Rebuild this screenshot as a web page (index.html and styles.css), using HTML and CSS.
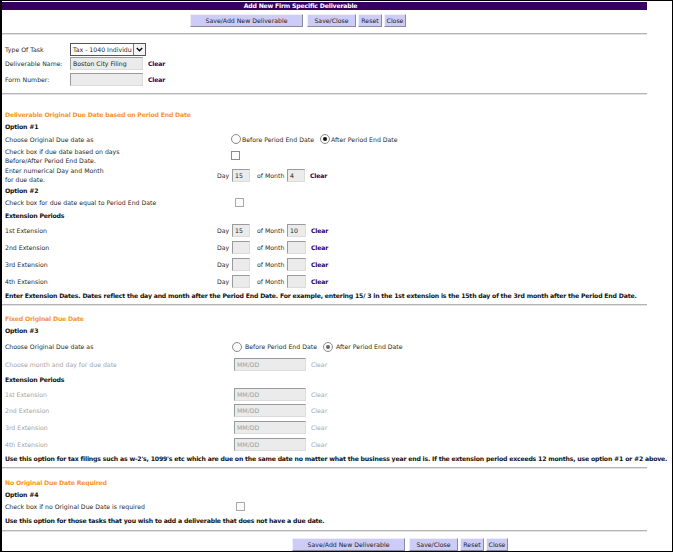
FILE: index.html
```html
<!DOCTYPE html>
<html>
<head>
<meta charset="utf-8">
<link rel="stylesheet" href="styles.css">
</head>
<body>
<div class="frame">
  <div class="page">
    <div class="titlebar">Add New Firm Specific Deliverable</div>
    <div class="btnbar top">
      <button class="btn w-save">Save/Add New Deliverable</button>
      <button class="btn w-close2">Save/Close</button>
      <button class="btn w-reset">Reset</button>
      <button class="btn w-close">Close</button>
    </div>
    <div class="rule"></div>

    <div class="fsec">
      <div class="frow h14">
        <span class="flabel">Type Of Task</span>
        <span class="selbox"><span class="seltext">Tax - 1040 Individu</span><span class="selarrow"><svg width="7" height="5" viewBox="0 0 7 5"><path d="M0.8 1 L3.5 3.8 L6.2 1" fill="none" stroke="#000" stroke-width="1.3"/></svg></span></span>
      </div>
      <div class="frow h15">
        <span class="flabel">Deliverable Name:</span>
        <span class="txt w73">Boston City Filing</span>
        <a class="clear">Clear</a>
      </div>
      <div class="frow h16">
        <span class="flabel">Form Number:</span>
        <span class="txt w73"></span>
        <a class="clear">Clear</a>
      </div>
    </div>
    <div class="rule r-form"></div>

    <div class="row h13 mt13"><span class="orange">Deliverable Original Due Date based on Period End Date</span></div>
    <div class="row h11"><b>Option #1</b></div>
    <div class="row h14">
      <span>Choose Original Due date as</span>
      <span class="ctl pl14"><i class="radio"></i><span class="rlab">Before Period End Date</span><i class="radio on"></i><span class="rlab">After Period End Date</span></span>
    </div>
    <div class="row h19">
      <span class="two">Check box if due date based on days<br>Before/After Period End Date.</span>
      <span class="ctl pl14"><i class="check"></i></span>
    </div>
    <div class="row h20">
      <span class="two">Enter numerical Day and Month<br>for due date.</span>
      <span class="ctl"><span class="dlab">Day</span><span class="txt w18">15</span><span class="mlab">of Month</span><span class="txt w18 m2">4</span><a class="clear">Clear</a></span>
    </div>
    <div class="row h11"><b>Option #2</b></div>
    <div class="row h13">
      <span>Check box for due date equal to Period End Date</span>
      <span class="ctl pl18"><i class="check lite"></i></span>
    </div>
    <div class="row h13"><b>Extension Periods</b></div>
    <div class="row h17">
      <span>1st Extension</span>
      <span class="ctl"><span class="dlab">Day</span><span class="txt w18">15</span><span class="mlab">of Month</span><span class="txt w19">10</span><a class="clear">Clear</a></span>
    </div>
    <div class="row h17">
      <span>2nd Extension</span>
      <span class="ctl"><span class="dlab">Day</span><span class="txt w18"></span><span class="mlab">of Month</span><span class="txt w19"></span><a class="clear">Clear</a></span>
    </div>
    <div class="row h17">
      <span>3rd Extension</span>
      <span class="ctl"><span class="dlab">Day</span><span class="txt w18"></span><span class="mlab">of Month</span><span class="txt w19"></span><a class="clear">Clear</a></span>
    </div>
    <div class="row h16">
      <span>4th Extension</span>
      <span class="ctl"><span class="dlab">Day</span><span class="txt w18"></span><span class="mlab">of Month</span><span class="txt w19"></span><a class="clear">Clear</a></span>
    </div>
    <div class="row h12"><b class="note">Enter Extension Dates. Dates reflect the day and month after the Period End Date. For example, entering 15/ 3 in the 1st extension is the 15th day of the 3rd month after the Period End Date.</b></div>
    <div class="rule r-mid"></div>

    <div class="row h12 mt6"><span class="orange">Fixed Original Due Date</span></div>
    <div class="row h13"><b>Option #3</b></div>
    <div class="row h19">
      <span>Choose Original Due date as</span>
      <span class="ctl pl15"><i class="radio"></i><span class="rlab l3">Before Period End Date</span><i class="radio on dim"></i><span class="rlab l3">After Period End Date</span></span>
    </div>
    <div class="row h16 gray">
      <span>Choose month and day for due date</span>
      <span class="ctl pl17"><span class="txt w72 ph">MM/DD</span><span class="gclear">Clear</span></span>
    </div>
    <div class="row h14"><b>Extension Periods</b></div>
    <div class="row h16 gray">
      <span>1st Extension</span>
      <span class="ctl pl17"><span class="txt w72 ph">MM/DD</span><span class="gclear">Clear</span></span>
    </div>
    <div class="row h17 gray">
      <span>2nd Extension</span>
      <span class="ctl pl17"><span class="txt w72 ph">MM/DD</span><span class="gclear">Clear</span></span>
    </div>
    <div class="row h17 gray">
      <span>3rd Extension</span>
      <span class="ctl pl17"><span class="txt w72 ph">MM/DD</span><span class="gclear">Clear</span></span>
    </div>
    <div class="row h16 gray">
      <span>4th Extension</span>
      <span class="ctl pl17"><span class="txt w72 ph">MM/DD</span><span class="gclear">Clear</span></span>
    </div>
    <div class="row h13"><b class="note">Use this option for tax filings such as w-2's, 1099's etc which are due on the same date no matter what the business year end is. If the extension period exceeds 12 months, use option #1 or #2 above.</b></div>
    <div class="rule r-mid2"></div>

    <div class="row h12 mt7"><span class="orange">No Original Due Date Required</span></div>
    <div class="row h12"><b>Option #4</b></div>
    <div class="row h13">
      <span>Check box if no Original Due Date is required</span>
      <span class="ctl pl19"><i class="check lite"></i></span>
    </div>
    <div class="row h14"><b class="note">Use this option for those tasks that you wish to add a deliverable that does not have a due date.</b></div>
    <div class="rule r-end"></div>
    <div class="btnbar bottom">
      <button class="btn w-save">Save/Add New Deliverable</button>
      <button class="btn w-close2">Save/Close</button>
      <button class="btn w-reset">Reset</button>
      <button class="btn w-close">Close</button>
    </div>
  </div>
</div>
</body>
</html>
```
FILE: styles.css
```css
* { box-sizing: border-box; }
html, body { margin: 0; padding: 0; background: #fff; }
body {
  font-family: "DejaVu Sans", "Liberation Sans", sans-serif;
  font-size: 6.2px;
  color: #2a2a2a;
}
.frame {
  width: 673px;
  height: 552px;
  border-style: solid;
  border-color: #000;
  border-width: 1px 1px 1px 2px;
  overflow: hidden;
}
.page { width: 645px; }

.titlebar {
  margin-top: 1px;
  height: 8px;
  line-height: 8px;
  background: #35005f;
  color: #fff;
  font-weight: bold;
  letter-spacing: -0.2px;
  text-align: center;
  padding-right: 48px;
}

.btnbar { display: flex; align-items: flex-start; }
.btnbar.top { height: 23px; padding: 4px 0 0 188px; }
.btnbar.bottom { padding: 6px 0 0 290px; }
.btn {
  height: 13px;
  padding: 0;
  margin: 0;
  font: inherit;
  color: #222;
  background: #ccccf6;
  border: 1px solid;
  border-color: #eeeeff #8a8a9a #8a8a9a #eeeeff;
  text-align: center;
}
.w-save { width: 113px; margin-right: 4px; }
.w-close2 { width: 49px; margin-right: 2px; }
.w-reset { width: 24px; margin-right: 2px; }
.w-close { width: 22px; }

.rule {
  height: 2px;
  border-top: 1px solid #b4b4b4;
  border-bottom: 1px solid #e4e4e4;
}
.r-form { margin-top: 6px; }
.r-mid { margin-top: 3px; }
.r-mid2 { margin-top: 2px; }
.r-end { margin-top: 3px; }

.fsec { padding-top: 7px; }
.frow { display: flex; align-items: center; padding-left: 3px; }
.flabel { width: 65px; flex: none; }

.selbox {
  display: flex;
  width: 76px;
  height: 13px;
  border: 1px solid #555;
  background: #fff;
}
.seltext {
  flex: 1;
  overflow: hidden;
  white-space: nowrap;
  line-height: 11px;
  padding-left: 2px;
}
.selarrow {
  width: 12px;
  flex: none;
  border-left: 1px solid #777;
  display: flex;
  align-items: center;
  justify-content: center;
  background: #f4f4f4;
}

.txt {
  display: inline-block;
  height: 13px;
  line-height: 11px;
  padding-left: 2px;
  background: #ebebeb;
  border: 1px solid;
  border-color: #9a9a9a #dcdcdc #dcdcdc #9a9a9a;
  white-space: nowrap;
  overflow: hidden;
  color: #222;
  flex: none;
}
.w73 { width: 73px; }
.w18 { width: 18px; }
.w19 { width: 19px; }
.w72 { width: 72px; }
.ph { color: #a0a0a0; }

.clear {
  color: #330066;
  font-weight: bold;
  letter-spacing: -0.2px;
  margin-left: 5px;
  text-decoration: none;
}
.gclear { color: #a8a8a8; margin-left: 5px; }

.row {
  display: grid;
  grid-template-columns: 212px auto;
  align-items: center;
  padding-left: 3px;
  white-space: nowrap;
}
.h11 { height: 11px; }
.h12 { height: 12px; }
.h13 { height: 13px; }
.h14 { height: 14px; }
.h15 { height: 15px; }
.h16 { height: 16px; }
.h17 { height: 17px; }
.h19 { height: 19px; }
.h20 { height: 20px; }
.mt13 { margin-top: 13px; }
.mt6 { margin-top: 6px; }
.mt7 { margin-top: 7px; }

.orange { color: #f7962f; font-weight: bold; letter-spacing: -0.2px; }
b { color: #111; letter-spacing: -0.2px; }
.note { color: #111; }
.two { line-height: 9px; }
.gray > span:first-child { color: #a4a4a4; }

.ctl { display: flex; align-items: center; }
.pl14 { padding-left: 14px; }
.pl15 { padding-left: 15px; }
.pl17 { padding-left: 17px; }
.pl18 { padding-left: 18px; }
.pl19 { padding-left: 19px; }

.radio {
  display: inline-block;
  width: 10px;
  height: 10px;
  border-radius: 50%;
  border: 1px solid #8a8a8a;
  background: #fbfbfb;
  flex: none;
  position: relative;
}
.radio.on::after {
  content: "";
  position: absolute;
  left: 2px;
  top: 2px;
  width: 4px;
  height: 4px;
  border-radius: 50%;
  background: #111;
}
.radio.on.dim::after { background: #666; }
.rlab { margin: 0 6px 0 1px; }
.rlab.l3 { margin: 0 6px 0 3px; }

.check {
  display: inline-block;
  width: 9px;
  height: 9px;
  border: 1px solid #8a8a8a;
  background: #fbfbfb;
}
.check.lite { border-color: #a8a8a8; }

.dlab { width: 15px; }
.mlab { margin-left: 7px; width: 30px; }
.m2 { margin-left: 0; }
```
